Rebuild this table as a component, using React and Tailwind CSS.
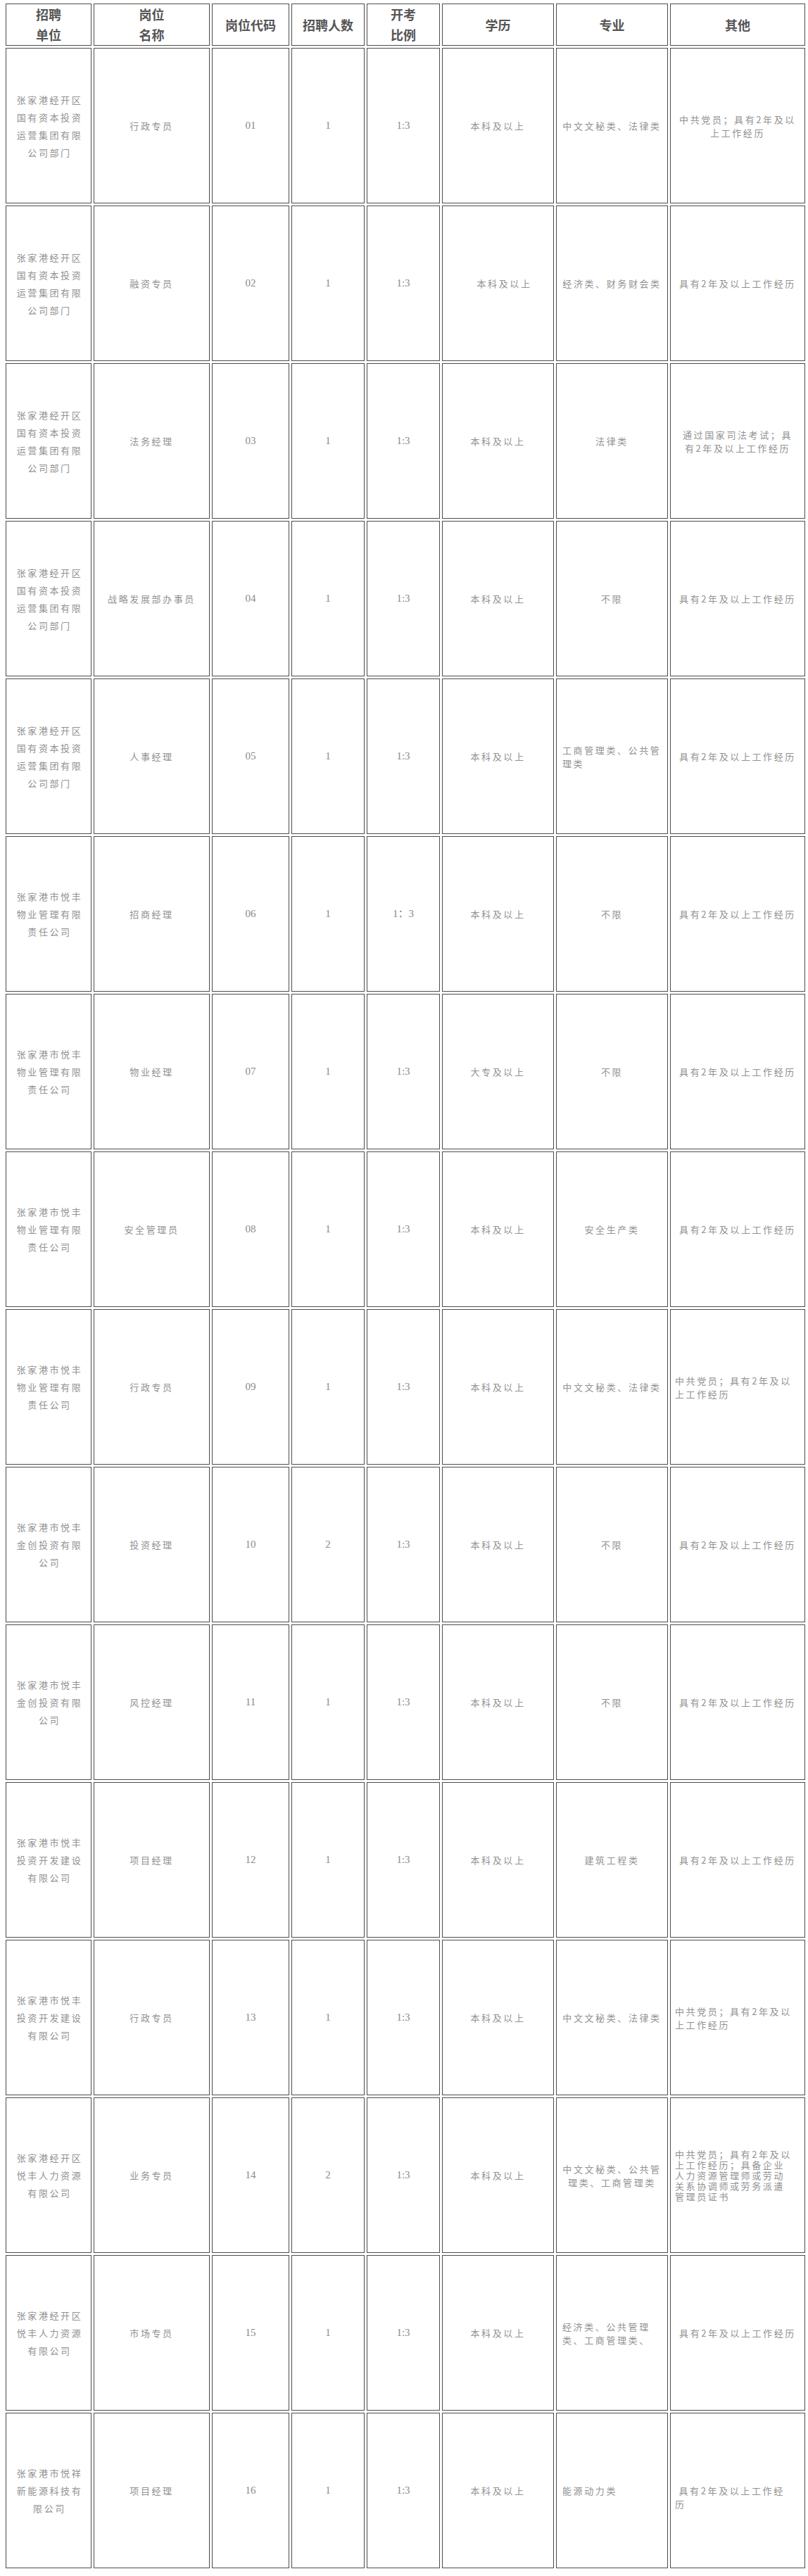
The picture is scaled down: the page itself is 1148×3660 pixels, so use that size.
const UNIT_A = ["张家港经开区", "国有资本投资", "运营集团有限", "公司部门"];
const UNIT_B = ["张家港市悦丰", "物业管理有限", "责任公司"];
const UNIT_C = ["张家港市悦丰", "金创投资有限", "公司"];
const UNIT_D = ["张家港市悦丰", "投资开发建设", "有限公司"];
const UNIT_E = ["张家港经开区", "悦丰人力资源", "有限公司"];
const UNIT_F = ["张家港市悦祥", "新能源科技有", "限公司"];

const EXP = ["具有2年及以上工作经历"];
const PARTY = ["中共党员；具有2年及以", "上工作经历"];

const ROWS = [
  { unit: UNIT_A, name: "行政专员", code: "01", num: "1", ratio: "1:3", edu: "本科及以上", major: ["中文文秘类、法律类"], other: PARTY },
  { unit: UNIT_A, name: "融资专员", code: "02", num: "1", ratio: "1:3", edu: "本科及以上", eduCls: "pl-[18px]", major: ["经济类、财务财会类"], other: EXP },
  { unit: UNIT_A, name: "法务经理", code: "03", num: "1", ratio: "1:3", edu: "本科及以上", major: ["法律类"], other: ["通过国家司法考试；具", "有2年及以上工作经历"] },
  { unit: UNIT_A, name: "战略发展部办事员", code: "04", num: "1", ratio: "1:3", edu: "本科及以上", major: ["不限"], other: EXP },
  { unit: UNIT_A, name: "人事经理", code: "05", num: "1", ratio: "1:3", edu: "本科及以上", major: ["工商管理类、公共管", "理类"], majorLeft: true, other: EXP },
  { unit: UNIT_B, name: "招商经理", code: "06", num: "1", ratio: "1：3", edu: "本科及以上", major: ["不限"], other: EXP },
  { unit: UNIT_B, name: "物业经理", code: "07", num: "1", ratio: "1:3", edu: "大专及以上", major: ["不限"], other: EXP },
  { unit: UNIT_B, name: "安全管理员", code: "08", num: "1", ratio: "1:3", edu: "本科及以上", major: ["安全生产类"], other: EXP },
  { unit: UNIT_B, name: "行政专员", code: "09", num: "1", ratio: "1:3", edu: "本科及以上", major: ["中文文秘类、法律类"], other: PARTY, otherLeft: true },
  { unit: UNIT_C, name: "投资经理", code: "10", num: "2", ratio: "1:3", edu: "本科及以上", major: ["不限"], other: EXP },
  { unit: UNIT_C, name: "风控经理", code: "11", num: "1", ratio: "1:3", edu: "本科及以上", major: ["不限"], other: EXP },
  { unit: UNIT_D, name: "项目经理", code: "12", num: "1", ratio: "1:3", edu: "本科及以上", major: ["建筑工程类"], other: EXP },
  { unit: UNIT_D, name: "行政专员", code: "13", num: "1", ratio: "1:3", edu: "本科及以上", major: ["中文文秘类、法律类"], other: PARTY, otherLeft: true },
  {
    unit: UNIT_E, name: "业务专员", code: "14", num: "2", ratio: "1:3", edu: "本科及以上",
    major: ["中文文秘类、公共管", "理类、工商管理类"],
    other: ["中共党员；具有2年及以", "上工作经历；具备企业", "人力资源管理师或劳动", "关系协调师或劳务派遣", "管理员证书"],
    otherLeft: true, otherTight: true,
  },
  { unit: UNIT_E, name: "市场专员", code: "15", num: "1", ratio: "1:3", edu: "本科及以上", major: ["经济类、公共管理", "类、工商管理类、"], majorLeft: true, other: EXP },
  { unit: UNIT_F, name: "项目经理", code: "16", num: "1", ratio: "1:3", edu: "本科及以上", major: ["能源动力类"], majorLeft: true, other: [" 具有2年及以上工作经", "历"], otherLeft: true, otherDrop: true },
];

const HEAD = [["招聘", "单位"], ["岗位", "名称"], ["岗位代码"], ["招聘人数"], ["开考", "比例"], ["学历"], ["专业"], ["其他"]];

const cell = "border-[1.5px] border-[#4d4d4d] bg-white flex flex-col justify-center";
const cjk = "font-['Noto_Sans_CJK_SC',sans-serif]";
const body = `${cjk} text-[13px] font-normal text-[#929292] tracking-[2.6px]`;
const num = "font-['Liberation_Serif','Noto_Sans_CJK_SC',serif] text-[15px] text-[#8a8a8a]";

const Lines = ({ lines }) =>
  lines.map((l, i) => (
    <div key={i} className="whitespace-pre">
      {l}
    </div>
  ));

export default function App() {
  return (
    <div className="bg-white w-[1148px] min-h-[3660px] pt-[5px] pl-[8px]">
      <div className="grid grid-cols-[122px_165px_110px_104px_104px_159px_159px_192px] gap-[3px] auto-rows-[221px] grid-rows-[60px]">
        {HEAD.map((h, i) => (
          <div key={i} className={`${cell} items-center text-center ${cjk} font-bold text-[18px] leading-[29px] text-[#555]`}>
            <Lines lines={h} />
          </div>
        ))}
        {ROWS.map((r) => (
          <div key={r.code} className="contents">
            <div className={`${cell} items-center text-center ${body} leading-[25px] pl-[3px]`}>
              <Lines lines={r.unit} />
            </div>
            <div className={`${cell} items-center text-center ${body}`}>{r.name}</div>
            <div className={`${cell} items-center text-center ${num}`}>{r.code}</div>
            <div className={`${cell} items-center text-center ${num}`}>{r.num}</div>
            <div className={`${cell} items-center text-center ${num}`}>{r.ratio}</div>
            <div className={`${cell} items-center text-center ${body} ${r.eduCls || ""}`}>{r.edu}</div>
            <div
              className={`${cell} ${body} leading-[19px] ${
                r.majorLeft ? "items-start text-left pl-[8px]" : "items-center text-center"
              }`}
            >
              <Lines lines={r.major} />
            </div>
            <div
              className={`${cell} ${body} ${r.otherTight ? "leading-[15px] tracking-[2.2px]" : "leading-[19px]"} ${
                r.otherLeft ? "items-start text-left pl-[6px]" : "items-center text-center"
              } ${r.otherDrop ? "pt-[18px]" : ""}`}
            >
              <Lines lines={r.other} />
            </div>
          </div>
        ))}
      </div>
    </div>
  );
}
